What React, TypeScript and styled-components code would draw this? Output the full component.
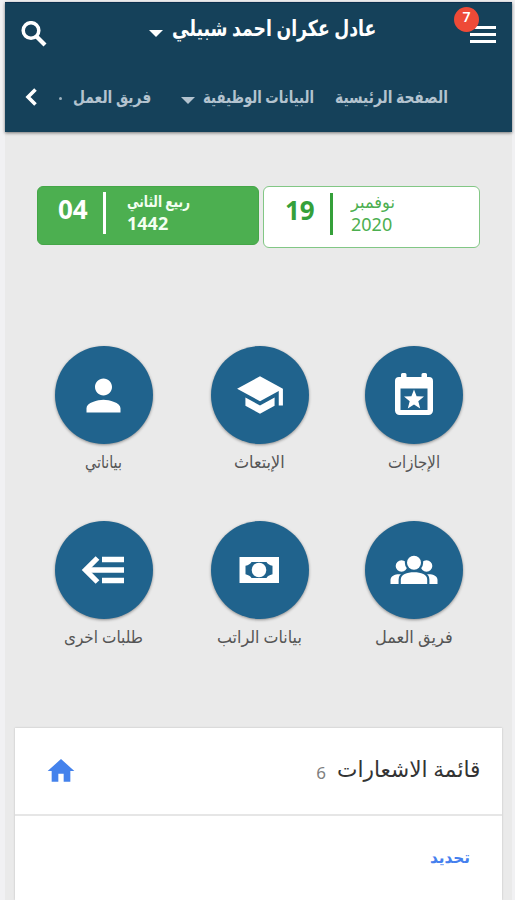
import React, { useLayoutEffect, useRef, useState } from "react";
import styled, { createGlobalStyle } from "styled-components";
import { MdHome, MdPerson, MdSchool } from "react-icons/md";

const GlobalStyle = createGlobalStyle`
  * { box-sizing: border-box; }
  body { margin: 0; background: #f1f1f3; }
`;

const Screen = styled.div`
  display: flex;
  flex-direction: column;
  height: 900px;
  width: 515px;
  padding: 2px 3px 0 5px;
  overflow: hidden;
  background: #f1f1f3;
  font-family: "Noto Sans", "DejaVu Sans", sans-serif;
`;

const Header = styled.header`
  flex: none;
  height: 130px;
  background: #15415a;
  border-top: 1px solid #0c2f4e;
  box-shadow: 0 1px 3px rgba(0, 0, 0, 0.5);
  z-index: 1;
`;

const TitleBar = styled.div`
  display: flex;
  align-items: center;
  height: 62px;
  padding: 0 16px 0 16px;
  color: #fff;
`;

const UserMenu = styled.div`
  display: flex;
  align-items: center;
  gap: 9px;
  margin: 0 auto 14px 102px;
`;

const MenuButton = styled.div`
  position: relative;
  display: flex;
  flex-direction: column;
  gap: 4px;
  width: 26px;
`;

const MenuBar = styled.span`
  height: 3px;
  background: #fff;
`;

const Badge = styled.span`
  position: absolute;
  left: -16px;
  top: -19px;
  width: 25px;
  height: 25px;
  border-radius: 50%;
  background: #ee4a37;
  color: #fff;
  font-size: 14px;
  font-weight: 600;
  line-height: 20px;
  text-align: center;
`;

const Tabs = styled.nav`
  display: flex;
  align-items: center;
  height: 64px;
  padding-left: 20px;
  color: #b3c3cf;
`;

const TabDot = styled.span`
  width: 3px;
  height: 3px;
  margin: 3px 11px 0 21px;
  background: #9fb1be;
  border-radius: 50%;
`;

const Tab = styled.div<{ $before: number }>`
  display: flex;
  align-items: center;
  gap: 8px;
  margin-left: ${(p) => p.$before}px;
`;

const Caret = styled.span<{ $size: number; $drop: number }>`
  border: ${(p) => p.$size}px solid transparent;
  border-bottom: 0;
  border-top-color: currentColor;
  margin-top: ${(p) => p.$drop}px;
`;

const Content = styled.main`
  flex: 1;
  display: flex;
  flex-direction: column;
  background: #eaeaea;
`;

const Dates = styled.section`
  display: flex;
  align-items: flex-start;
  gap: 4px;
  height: 116px;
  padding: 54px 0 0 32px;
`;

const DateBox = styled.div<{ $filled?: boolean }>`
  display: flex;
  align-items: flex-start;
  width: ${(p) => (p.$filled ? 222 : 217)}px;
  height: ${(p) => (p.$filled ? 59 : 62)}px;
  padding: ${(p) => (p.$filled ? "5px 0 0 20px" : "6px 0 0 21px")};
  border: 1px solid ${(p) => (p.$filled ? "#45a648" : "#82c785")};
  border-radius: 6px;
  background: ${(p) => (p.$filled ? "#4caf50" : "#fff")};
  color: ${(p) => (p.$filled ? "#f4fff2" : "#4caf50")};
  font-weight: ${(p) => (p.$filled ? 700 : 400)};
`;

const Day = styled.strong<{ $color: string }>`
  width: 45px;
  color: ${(p) => p.$color};
  font-size: 26px;
  font-weight: 700;
  line-height: 34px;
`;

const DateRule = styled.span<{ $color: string; $gap: number }>`
  width: 3px;
  height: 42px;
  background: ${(p) => p.$color};
  margin-right: ${(p) => p.$gap}px;
`;

const MonthYear = styled.div`
  display: flex;
  flex-direction: column;
  align-items: flex-start;
  margin-top: -5px;
  font-size: 18px;
`;

const Year = styled.span`
  line-height: 16px;
`;

const Shortcuts = styled.section`
  display: grid;
  grid-template-columns: 156px 154px 98px;
  row-gap: 33px;
  padding: 98px 0 0 49.5px;
`;

const Shortcut = styled.div`
  display: flex;
  flex-direction: column;
  align-items: center;
  width: 98px;
  height: 142px;
  color: #555;
`;

const Circle = styled.div`
  display: flex;
  align-items: center;
  justify-content: center;
  flex: none;
  width: 98px;
  height: 98px;
  margin-bottom: 4px;
  border-radius: 50%;
  background: #20638d;
  color: #fff;
  box-shadow: 0 1px 3px rgba(0, 0, 0, 0.4);
`;

const Card = styled.section`
  flex: 1;
  margin: 65px 10px 0;
  background: #fff;
  box-shadow: 0 0 2px rgba(0, 0, 0, 0.2);
`;

const CardHeader = styled.div`
  display: flex;
  align-items: center;
  height: 88px;
  padding: 0 22px 0 30px;
  border-bottom: 2px solid #e6e6e6;
  color: #333;
`;

const CardTitle = styled.div`
  margin-bottom: 7px;
`;

const Count = styled.span`
  margin: 2px 11px 0 auto;
  color: #808080;
  font-size: 17px;
`;

const CardBody = styled.div`
  display: flex;
  justify-content: flex-end;
  padding: 27px 32px;
  color: #4580ee;
`;

const FitBox = styled.span<{ $width: number; $size: number; $bold?: boolean }>`
  display: block;
  flex: none;
  width: ${(p) => p.$width}px;
  height: 28px;
  direction: ltr;
  font-size: ${(p) => p.$size}px;
  font-weight: ${(p) => (p.$bold ? 700 : 400)};
  line-height: 28px;
`;

const FitInner = styled.span`
  display: inline-block;
  direction: rtl;
  white-space: nowrap;
  transform-origin: 0 50%;
`;

type FitProps = { width: number; size: number; bold?: boolean; children: string };

/* Scales a line of Arabic horizontally so that it fills its column. */
function FitText({ width, size, bold, children }: FitProps) {
  const ref = useRef<HTMLSpanElement>(null);
  const [scale, setScale] = useState(1);
  useLayoutEffect(() => {
    if (ref.current) setScale(width / ref.current.offsetWidth);
  }, [width, size, bold, children]);
  return (
    <FitBox $width={width} $size={size} $bold={bold}>
      <FitInner ref={ref} style={{ transform: `scaleX(${scale})` }}>
        {children}
      </FitInner>
    </FitBox>
  );
}

const SearchIcon = () => (
  <svg width="26" height="26" viewBox="0 0 26 26" fill="none" stroke="currentColor">
    <circle cx="10" cy="9.500" r="7.800" strokeWidth="3.500" />
    <path d="M15.500 15.500l8.500 8.500" strokeWidth="4.200" />
  </svg>
);

const CalendarIcon = () => (
  <svg width="40" height="44" viewBox="0 0 40 44">
    <path
      fill="currentColor"
      fillRule="evenodd"
      d="M7 1.500a1.500 1.500 0 0 1 1.500-1.500h2.500a1.500 1.500 0 0 1 1.500 1.500V4h15V1.500A1.500 1.500 0 0 1 29 0h2.500A1.500 1.500 0 0 1 33 1.500V4h2a4 4 0 0 1 4 4v29.500a4.500 4.500 0 0 1-4.500 4.500h-29A4.500 4.500 0 0 1 1 37.500V8a4 4 0 0 1 4-4h2zM6.500 15.500V37h27V15.500z"
    />
    <path fill="currentColor" d="M20 16.500l2.600 6.700 7.400.4-5.700 4.700 1.900 7.200-6.200-4-6.200 4 1.900-7.200-5.700-4.700 7.400-.4z" />
  </svg>
);

const CashIcon = () => (
  <svg width="42" height="28" viewBox="0 0 42 28">
    <path
      fill="currentColor"
      fillRule="evenodd"
      d="M.5 1h39.500v26H.5zM12.500 6c-.8 2-3 3-6 3.800v8.400c3 .8 5.200 1.800 6 3.800h15c.8-2 3-3 6-3.800V9.800c-3-.8-5.200-1.800-6-3.800z"
    />
    <circle cx="20" cy="14" r="7.300" fill="currentColor" />
  </svg>
);

const RequestsIcon = () => (
  <svg width="46" height="28" viewBox="0 0 46 28" fill="none" stroke="currentColor" strokeWidth="5.300">
    <path d="M21 3.500h22M6 14h37M21 24.500h22" />
    <path d="M16.500 2L4.500 14l12 12" />
  </svg>
);

const TeamIcon = () => (
  <svg width="50" height="30" viewBox="0 0 50 30" fill="currentColor">
    <circle cx="12.500" cy="11" r="5.800" />
    <circle cx="37.500" cy="11" r="5.800" />
    <path d="M1.500 29v-4c0-4 4-5.800 9-5.800h29c5 0 9 1.800 9 5.800v4z" />
    <g stroke="#20638d" strokeWidth="4.400" paintOrder="stroke">
      <path d="M11.800 29v-4.500c0-5 6-7.300 13.200-7.300s13.200 2.300 13.200 7.300V29z" />
      <circle cx="25" cy="7.800" r="7" />
    </g>
    <path fill="#20638d" d="M0 29h50v1H0z" />
  </svg>
);

const BackIcon = () => (
  <svg width="13" height="18" viewBox="0 0 13 18" fill="none" stroke="#fff" strokeWidth="3.600">
    <path d="M10.500 1.500L3 9l7.500 7.500" />
  </svg>
);

const shortcuts = [
  { label: "بياناتي", width: 37, icon: <MdPerson size={51} /> },
  { label: "الإبتعاث", width: 51, icon: <MdSchool size={50} /> },
  { label: "الإجازات", width: 52, icon: <CalendarIcon /> },
  { label: "طلبات اخرى", width: 79, icon: <RequestsIcon /> },
  { label: "بيانات الراتب", width: 85, icon: <CashIcon /> },
  { label: "فريق العمل", width: 78, icon: <TeamIcon /> },
];

export default function App() {
  return (
    <Screen>
      <GlobalStyle />
      <Header>
        <TitleBar>
          <SearchIcon />
          <UserMenu>
            <Caret $size={7.5} $drop={12} />
            <FitText width={204} size={22} bold>عادل عكران احمد شبيلي</FitText>
          </UserMenu>
          <MenuButton>
            <MenuBar />
            <MenuBar />
            <MenuBar />
            <Badge>7</Badge>
          </MenuButton>
        </TitleBar>
        <Tabs>
          <BackIcon />
          <TabDot />
          <FitText width={78} size={17} bold>فريق العمل</FitText>
          <Tab $before={30}>
            <Caret $size={7} $drop={7} />
            <FitText width={111} size={17} bold>البيانات الوظيفية</FitText>
          </Tab>
          <Tab $before={21}>
            <FitText width={113} size={17} bold>الصفحة الرئيسية</FitText>
          </Tab>
        </Tabs>
      </Header>
      <Content>
        <Dates>
          <DateBox $filled>
            <Day $color="#fff">04</Day>
            <DateRule $color="#fff" $gap={21} />
            <MonthYear>
              <FitText width={63} size={16} bold>ربيع الثاني</FitText>
              <Year>1442</Year>
            </MonthYear>
          </DateBox>
          <DateBox>
            <Day $color="#35a03a">19</Day>
            <DateRule $color="#35a03a" $gap={18} />
            <MonthYear>
              <FitText width={44} size={17}>نوفمبر</FitText>
              <Year>2020</Year>
            </MonthYear>
          </DateBox>
        </Dates>
        <Shortcuts>
          {shortcuts.map((s) => (
            <Shortcut key={s.label}>
              <Circle>{s.icon}</Circle>
              <FitText width={s.width} size={17}>{s.label}</FitText>
            </Shortcut>
          ))}
        </Shortcuts>
        <Card>
          <CardHeader>
            <MdHome size={32} color="#4482ec" />
            <Count>6</Count>
            <CardTitle>
              <FitText width={143} size={22}>قائمة الاشعارات</FitText>
            </CardTitle>
          </CardHeader>
          <CardBody>
            <FitText width={40} size={16} bold>تحديد</FitText>
          </CardBody>
        </Card>
      </Content>
    </Screen>
  );
}
